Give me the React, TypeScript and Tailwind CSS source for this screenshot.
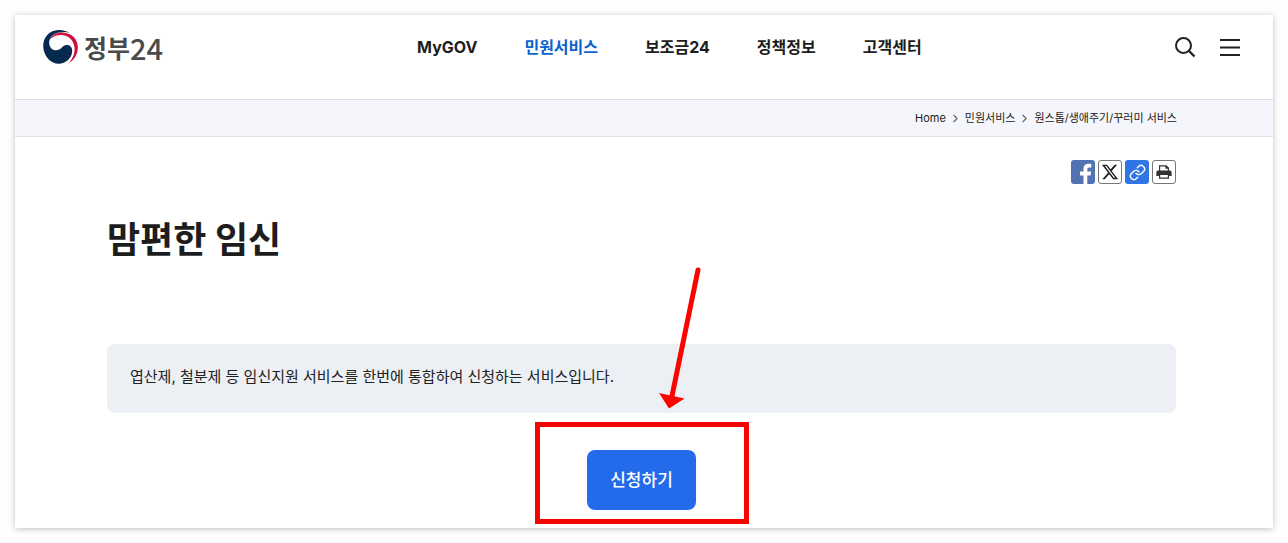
import { ChevronRight, Link as LinkIcon } from "lucide-react"
import { FaXTwitter } from "react-icons/fa6"

const menu = [
  { label: "MyGOV", active: false },
  { label: "민원서비스", active: true },
  { label: "보조금24", active: false },
  { label: "정책정보", active: false },
  { label: "고객센터", active: false },
]

const crumbs = ["Home", "민원서비스", "원스톱/생애주기/꾸러미 서비스"]

function Logo() {
  return (
    <a href="#" className="flex items-center gap-[6px] text-[#4a4a4a]">
      <svg viewBox="0 0 104 102" className="h-[34px] w-[35px]" aria-hidden="true">
        <path
          fill="#d0103a"
          d="M20 28 C28 12 46 5 64 8 C90 12 104 30 104 52 C104 74 92 92 76 100 C88 88 96 70 94 52 C91 30 76 15 54 15 C40 15 30 19 20 28Z"
        />
        <path
          fill="#05294f"
          d="M78 8 C60 -2 38 -3 22 7 C4 19 -2 38 1 57 C5 82 24 101 46 101 C68 101 87 84 87 62 C87 49 76 43 66 46 C56 49 53 61 39 61 C27 61 18 51 18 38 C19 18 36 8 54 7 C62 6 70 6 78 8Z"
        />
      </svg>
      <span className="flex items-center font-['Noto_Sans_CJK_KR',sans-serif] leading-[34px]">
        <span className="text-[25px] font-bold">정부</span>
        <span className="text-[29px] font-medium">24</span>
      </span>
    </a>
  )
}

function Header() {
  return (
    <header className="flex items-center pt-[15px] pb-[35px] pl-7 pr-[33px]">
      <Logo />

      <nav className="ml-[254px] flex gap-[47px] text-[16px] leading-[34px] font-bold text-[#1d1d1d]">
        {menu.map((item) => (
          <a key={item.label} href="#" className={item.active ? "text-[#0b63ce]" : ""}>
            {item.label}
          </a>
        ))}
      </nav>

      <div className="ml-auto flex items-center gap-6 text-[#222]">
        <button type="button" aria-label="검색">
          <svg viewBox="0 0 22 22" className="size-[22px]" fill="none" stroke="currentColor" strokeWidth="2">
            <circle cx="9.5" cy="9.5" r="7.5" />
            <path d="M15 15l5.5 5.5" strokeWidth="2.4" />
          </svg>
        </button>
        <button type="button" aria-label="전체메뉴">
          <svg viewBox="0 0 20 18" className="h-[18px] w-5" fill="none" stroke="currentColor" strokeWidth="2">
            <path d="M0 2h20M0 9.500h20M0 17h20" />
          </svg>
        </button>
      </div>
    </header>
  )
}

function Breadcrumb() {
  return (
    <div className="border-y border-[#dfe1e6] bg-[#f5f6fb] pl-[92px] pr-[96px]">
      <ol className="flex items-center justify-end gap-[3px] text-[11px] leading-9 text-[#222]">
        {crumbs.map((name, i) => (
          <li key={name} className="flex items-center gap-[3px]">
            {i > 0 && <ChevronRight size={13} className="text-[#666]" />}
            <a href="#">{name}</a>
          </li>
        ))}
      </ol>
    </div>
  )
}

function ShareButtons() {
  return (
    <div className="flex justify-end gap-[3px]">
      <button
        type="button"
        aria-label="페이스북"
        className="size-6 overflow-hidden rounded-[3px] bg-[#5272b4] text-white"
      >
        <svg viewBox="0 0 24 24" className="size-6" fill="currentColor" aria-hidden="true">
          <path d="M12.500 24v-8.600H9v-3.900h3.500V8.600C12.500 5.300 14.500 3.700 17.400 3.700c1.300 0 2.300.1 2.900.2v3.500h-2c-1.600 0-2 .8-2 1.900v2.200h3.900l-.6 3.900h-3.300V24Z" />
        </svg>
      </button>
      <button
        type="button"
        aria-label="X"
        className="flex size-6 items-center justify-center rounded-[3px] border border-[#777] text-[#222]"
      >
        <FaXTwitter size={18} />
      </button>
      <button
        type="button"
        aria-label="링크 복사"
        className="flex size-6 items-center justify-center rounded-[3px] bg-[#2f76e4] text-white"
      >
        <LinkIcon size={17} />
      </button>
      <button
        type="button"
        aria-label="인쇄"
        className="flex size-6 items-center justify-center rounded-[3px] border border-[#777] text-[#333]"
      >
        <svg viewBox="0 0 16 14" className="h-[14px] w-4" aria-hidden="true">
          <path
            fill="none"
            stroke="currentColor"
            strokeWidth="1.2"
            d="M3.6 6.5V.8h6.6l2.2 2.2v3.5M10 .8v2.4h2.4"
          />
          <path fill="currentColor" d="M2 5.5h12a1.6 1.6 0 0 1 1.6 1.6V11H.4V7.1A1.6 1.6 0 0 1 2 5.5Z" />
          <path fill="#fff" stroke="currentColor" strokeWidth="1.2" d="M3.6 9.4h8.8v3.8H3.6Z" />
        </svg>
      </button>
    </div>
  )
}

export default function App() {
  return (
    <div className="bg-[#fefefe] p-[15px] font-['Inter','Noto_Sans_CJK_KR',sans-serif]">
      <div className="bg-white shadow-[0_1px_6px_rgba(0,0,0,0.25)]">
        <Header />
        <Breadcrumb />

        <main className="pt-[23px] pb-1 pl-[92px] pr-[97px]">
          <ShareButtons />

          <h1 className="mt-[29px] text-[36px] leading-[54px] font-bold text-[#1d1d1d]">맘편한 임신</h1>

          <p className="mt-[77px] rounded-lg bg-[#eceff4] px-[23px] pt-[21px] pb-6 text-[15px] leading-6 text-[#222]">
            엽산제, 철분제 등 임신지원 서비스를 한번에 통합하여 신청하는 서비스입니다.
          </p>

          {/* highlighted apply button */}
          <div className="relative mx-auto mt-[9px] flex w-[214px] justify-center border-5 border-[#f60400] pt-[23px] pb-[9px]">
            <button
              type="button"
              className="rounded-lg bg-[#246beb] px-[23px] text-[17px] leading-[60px] font-medium text-white"
            >
              신청하기
            </button>
            <svg
              viewBox="0 0 50 145"
              className="absolute top-[-162px] left-[115px] h-[145px] w-[50px]"
              aria-hidden="true"
            >
              <path d="M43 5L17 131" stroke="#fb0400" strokeWidth="5" strokeLinecap="round" />
              <path d="M4 128L29.5 133.5L14 143.5Z" fill="#fb0400" />
            </svg>
          </div>
        </main>
      </div>
    </div>
  )
}
